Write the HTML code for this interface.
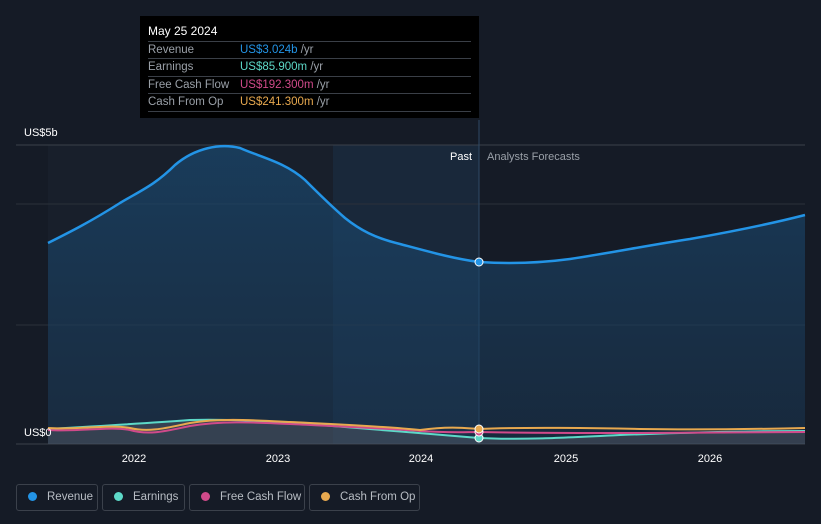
<!DOCTYPE html>
<html><head><meta charset="utf-8"><style>
html,body{margin:0;width:821px;height:524px;overflow:hidden}
body{background:#151b26;font-family:"Liberation Sans",sans-serif;position:relative}
.tt{position:absolute;left:140px;top:16px;width:339px;height:102px;background:#000;color:#fff;font-size:11.5px}
.tt .r{position:absolute;left:8px;width:323px;border-top:1px solid #3a3f47;height:17px;line-height:17px;color:#9aa0a8}
.tt .r span{position:absolute;left:92px}
.lg{position:absolute;top:484px;height:27px;border:1px solid #3b414b;border-radius:3px;color:#b8bdc4;font-size:11.5px;line-height:25px;box-sizing:border-box;white-space:nowrap}
.lg i{display:inline-block;width:9px;height:9px;border-radius:50%;margin:0 10px 0 11px;vertical-align:-1px}
</style></head><body>
<svg width="821" height="524" style="position:absolute;left:0;top:0">
<defs><linearGradient id="g" x1="0" y1="0" x2="0" y2="1"><stop offset="0" stop-color="#1a4a72" stop-opacity=".9"/><stop offset="1" stop-color="#1a3a58" stop-opacity=".6"/></linearGradient></defs>
<rect x="48" y="145" width="431" height="299" fill="#181f2b"/>
<rect x="333" y="145" width="146" height="299" fill="#19283a"/>
<line x1="16" y1="145" x2="805" y2="145" stroke="#3a404a"/>
<line x1="16" y1="204" x2="805" y2="204" stroke="#2a303a"/>
<line x1="16" y1="325" x2="805" y2="325" stroke="#2a303a"/>
<line x1="16" y1="444" x2="805" y2="444" stroke="#3a404a"/>
<line x1="479" y1="120" x2="479" y2="444" stroke="#2e4a66"/>
<path d="M48,243 C70,232 90,222 120,203 C140,191 155,185 175,165 C195,148 220,143 240,148 C260,157 285,162 305,180 C320,195 330,205 345,218 C360,230 375,238 400,244 C430,252 455,259 479,262 C510,264 540,263 570,259 C610,253 650,245 690,239 C730,232 770,224 805,215 L805,444 L48,444 Z" fill="url(#g)" opacity=".75"/>
<path d="M48,243 C70,232 90,222 120,203 C140,191 155,185 175,165 C195,148 220,143 240,148 C260,157 285,162 305,180 C320,195 330,205 345,218 C360,230 375,238 400,244 C430,252 455,259 479,262 C510,264 540,263 570,259 C610,253 650,245 690,239 C730,232 770,224 805,215" fill="none" stroke="#2394e6" stroke-width="2.5"/>
<path d="M48,429 C100,426 150,423 190,420 C230,419 270,421 320,425 C380,430 420,433 479,438 C520,440 560,438 620,435 C700,432 760,431 805,431 L805,444 L48,444Z" fill="#6a6a72" opacity=".35"/>
<path d="M48,429 C100,426 150,423 190,420 C230,419 270,421 320,425 C380,430 420,433 479,438 C520,440 560,438 620,435 C700,432 760,431 805,431" fill="none" stroke="#5dd9c8" stroke-width="2"/>
<path d="M48,430 C80,432 110,426 130,430 C150,436 170,430 190,426 C220,421 250,422 290,424 C330,426 380,428 420,431 C450,433 465,432 479,432 C520,433 600,433 640,433 C700,433 760,432 805,432" fill="none" stroke="#d04a8a" stroke-width="2"/>
<path d="M48,428 C80,430 110,424 130,428 C150,433 170,427 190,423 C220,418 250,420 290,422 C330,424 380,426 420,430 C450,426 465,428 479,429 C520,427 600,428 640,429 C700,430 760,429 805,428" fill="none" stroke="#e8a94f" stroke-width="2"/>
<circle cx="479" cy="262" r="4" fill="#2394e6" stroke="#fff" stroke-width="1"/>
<circle cx="479" cy="438" r="4" fill="#5dd9c8" stroke="#fff" stroke-width="1"/>
<circle cx="479" cy="432" r="4" fill="#d04a8a" stroke="#fff" stroke-width="1"/>
<circle cx="479" cy="429" r="4" fill="#e8a94f" stroke="#fff" stroke-width="1"/>
<g fill="#fff" font-size="11">
<text x="24" y="136">US$5b</text><text x="24" y="436">US$0</text>
<text x="472" y="160" text-anchor="end">Past</text>
<text x="487" y="160" fill="#9aa0a8">Analysts Forecasts</text>
<text x="134" y="462" text-anchor="middle">2022</text><text x="278" y="462" text-anchor="middle">2023</text>
<text x="421" y="462" text-anchor="middle">2024</text><text x="566" y="462" text-anchor="middle">2025</text><text x="710" y="462" text-anchor="middle">2026</text>
</g>
</svg>
<div class="tt">
<div style="position:absolute;left:8px;top:8px;font-size:12px">May 25 2024</div>
<div class="r" style="top:25px">Revenue<span><b style="font-weight:normal;color:#2394e6">US$3.024b</b> /yr</span></div>
<div class="r" style="top:42px">Earnings<span><b style="font-weight:normal;color:#5dd9c8">US$85.900m</b> /yr</span></div>
<div class="r" style="top:60px">Free Cash Flow<span><b style="font-weight:normal;color:#d04a8a">US$192.300m</b> /yr</span></div>
<div class="r" style="top:77px">Cash From Op<span><b style="font-weight:normal;color:#e8a94f">US$241.300m</b> /yr</span></div>
<div class="r" style="top:95px;height:0"></div>
</div>
<div class="lg" style="left:16px;width:82px"><i style="background:#2394e6"></i>Revenue</div>
<div class="lg" style="left:102px;width:83px"><i style="background:#5dd9c8"></i>Earnings</div>
<div class="lg" style="left:189px;width:116px"><i style="background:#d04a8a"></i>Free Cash Flow</div>
<div class="lg" style="left:309px;width:111px"><i style="background:#e8a94f"></i>Cash From Op</div>
</body></html>
